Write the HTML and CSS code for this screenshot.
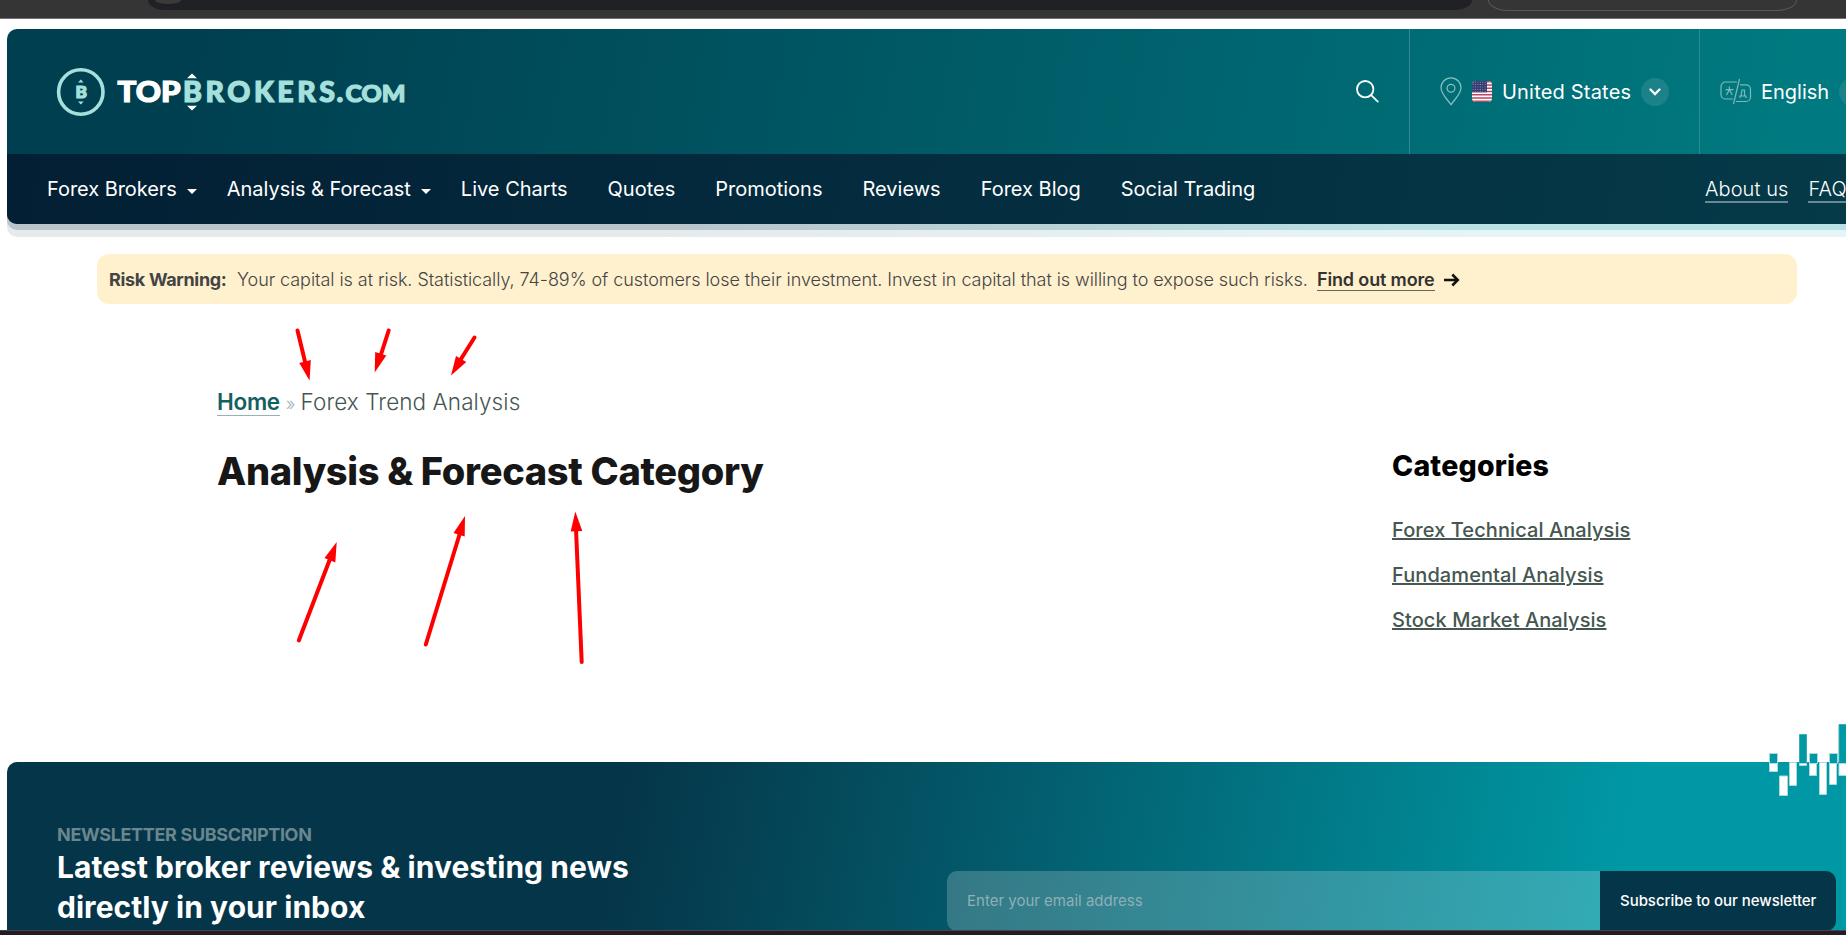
FILE: index.html
```html
<!DOCTYPE html>
<html lang="en">
<head>
<meta charset="utf-8">
<title>Analysis &amp; Forecast Category</title>
<link rel="stylesheet" href="styles.css">
</head>
<body>
<div class="chrome">
  <div class="address"><span class="site-info"></span></div>
  <div class="pill"></div>
</div>
<main class="page">
  <header class="header">
    <div class="top">
      <a class="logo">
        <svg width="360" height="60" viewBox="50 61.5 360 60">
          <circle cx="80.8" cy="91.5" r="22.2" fill="none" stroke="#a6e0dc" stroke-width="3.6"/>
          <text class="logo-text mint" x="75.500" y="97.500" font-size="17.500" textLength="11.5" lengthAdjust="spacingAndGlyphs">B</text>
          <path d="M78 82l2.8-3 2.8 3zM78 101l2.8 3 2.8-3z" fill="#a6e0dc"/>
          <text class="logo-text white" x="117.500" y="101.700" font-size="28.500" textLength="63" lengthAdjust="spacingAndGlyphs">TOP</text>
          <text class="logo-text mint" x="183" y="101.700" font-size="28.500" textLength="152" lengthAdjust="spacing">BROKERS</text>
          <text class="logo-text mint" x="336.5" y="101.700" font-size="28.500">.</text>
          <text class="logo-text mint" x="345.500" y="101.700" font-size="23" textLength="60" lengthAdjust="spacingAndGlyphs">COM</text>
          <path d="M187 77.8l5-4.8 5 4.8zM187 105.3l5 4.8 5-4.8z" fill="#fff"/>
        </svg>
      </a>
      <div class="search">
        <svg width="24" height="24" viewBox="0.6 0.6 24 24" fill="none" stroke="#fff" stroke-width="1.8" stroke-linecap="round"><circle cx="9.8" cy="9.8" r="8.2"/><path d="M16 16l6.4 6.2"/></svg>
      </div>
      <div class="region">
        <svg class="pin" width="22" height="29" viewBox="0 0 22 29" fill="none" stroke="#8bc0c3" stroke-width="1.2"><path d="M11 27.7C7.5 22.5 1 17 1 10.8a10 10 0 0 1 20 0C21 17 14.500 22.500 11 27.700z"/><circle cx="11" cy="11.300" r="3.900"/></svg>
        <svg class="flag" width="20" height="21" viewBox="0 0 20 21"><defs><clipPath id="flagclip"><rect width="20" height="21" rx="4"/></clipPath><pattern id="stars" width="2.400" height="2.400" patternUnits="userSpaceOnUse"><circle cx="1" cy="1" r=".5" fill="#b9bfe0"/></pattern></defs><g clip-path="url(#flagclip)"><rect width="20" height="21" fill="#fff"/><path d="M0 .8h20M0 4h20M0 7.250h20M0 10.500h20M0 13.700h20M0 16.950h20M0 20.200h20" stroke="#b9475f" stroke-width="1.620"/><rect width="15" height="11.300" fill="#34396f"/><rect width="15" height="11.300" fill="url(#stars)"/></g></svg>
        <span class="label">United States</span>
        <span class="round"><svg width="12" height="8" viewBox="0 0 12 8" fill="none" stroke="#fff" stroke-width="2.300" stroke-linecap="round"><path d="M1.500 1.500L6 6l4.500-4.500"/></svg></span>
      </div>
      <div class="language">
        <svg width="32" height="27" viewBox="0 0 32 27" fill="none" stroke="#7fb9bd" stroke-width="1.200"><path d="M17 4H5.500A4.500 4.500 0 0 0 1 8.500v8A4.500 4.500 0 0 0 5.500 21H13M19.500 1L13.500 26M20 6.800h6a4.500 4.500 0 0 1 4.500 4.500V19a4.500 4.500 0 0 1-4.500 4.500H16M9.300 8.500v3.300M5.500 11.700h8M6.500 17l2.800-5.200 3 5.200"/><path d="M20 20v-2h6v2M21 18l1-6h2.500v6"/></svg>
        <span class="label">English</span>
        <span class="round"></span>
      </div>
    </div>
    <nav class="nav">
      <a class="drop">Forex Brokers</a><a class="drop">Analysis &amp; Forecast</a><a>Live Charts</a><a>Quotes</a><a>Promotions</a><a>Reviews</a><a>Forex Blog</a><a>Social Trading</a>
      <div class="aside"><a>About us</a><a>FAQ</a></div>
    </nav>
  </header>

  <div class="risk">
    <b>Risk Warning:</b>
    <span class="risk-text">Your capital is at risk. Statistically, 74-89% of customers lose their investment. Invest in capital that is willing to expose such risks.</span>
    <a>Find out more</a>
    <svg width="16" height="14" viewBox="0 0 16 14" fill="none" stroke="#111" stroke-width="2.500"><path d="M0 7h13.500M8.300 1.500L13.800 7l-5.500 5.500"/></svg>
  </div>

  <div class="content">
    <section class="main">
      <div class="crumbs"><a>Home</a><span class="sep">»</span><span class="current">Forex Trend Analysis</span></div>
      <h1>Analysis &amp; Forecast Category</h1>
    </section>
    <aside class="categories">
      <h2>Categories</h2>
      <a>Forex Technical Analysis</a>
      <a>Fundamental Analysis</a>
      <a>Stock Market Analysis</a>
    </aside>
  </div>

  <section class="newsletter">
    <div class="pitch">
      <p class="kicker">NEWSLETTER SUBSCRIPTION</p>
      <p class="headline">Latest broker reviews &amp; investing news<br>directly in your inbox</p>
    </div>
    <form class="form"><div class="field">Enter your email address</div><div class="submit">Subscribe to our newsletter</div></form>
    <svg class="candles" width="78" height="76" viewBox="1768 723 78 76">
      <g stroke="#a9dadd" stroke-width="1">
        <g fill="#0098a4"><path d="M1769.500 753.500h8v10h-8zM1809.500 753.500h8v10h-8zM1829.500 753.500h8v10h-8z"/><path stroke="#39adb6" d="M1799.500 734.500h7v29h-7zM1839 724.500h9v39h-9z"/></g>
        <g fill="#fff"><path d="M1769.500 763.500h8v8h-8zM1779.500 776h8v19.500h-8zM1789.500 762.500h7v23h-7zM1799.500 763.500h7v2h-7zM1809.500 763.500h7v12h-7zM1819.500 762.500h7v32h-7zM1829.500 763.500h7v21h-7zM1839 763.500h9v12h-9z"/></g>
      </g>
    </svg>
  </section>
</main>
<div class="taskbar"></div>
<svg class="annotations" width="1846" height="935" viewBox="0 0 1846 935">
  <g stroke="#f00" stroke-width="4" stroke-linecap="round" fill="none">
    <path d="M297.500 330.500L305.600 364"/><path d="M388.700 330.500L380.500 356"/><path d="M474.500 337.500L461 359"/>
    <path d="M298.800 640.500L330 559"/><path d="M425.800 644.500L460 533"/><path d="M581.700 662L576 529"/>
  </g>
  <g stroke="none" fill="#f00">
    <path d="M309.500 380.500L299.300 363L310.800 360z"/><path d="M374.700 372.500L375.200 352L386.300 355.500z"/><path d="M451 375.500L456 356L466.300 362z"/>
    <path d="M336.700 542L324.500 558L335.300 562.500z"/><path d="M465 516L453.500 533L464.700 536.500z"/><path d="M575.300 511.500L570.700 531.500L582.300 531z"/>
  </g>
</svg>
</body>
</html>
```

FILE: styles.css
```css
* { box-sizing: border-box; }
body { margin: 0; width: 1846px; height: 935px; overflow: hidden; background: #fff; font-family: Inter, "Liberation Sans", sans-serif; display: flex; flex-direction: column; }
p, h1, h2 { margin: 0; }

.chrome { height: 19px; flex: none; background: #353535; border-bottom: 1px solid #707070; padding-left: 148px; display: flex; align-items: flex-start; gap: 16px; overflow: hidden; }
.address { width: 1324px; height: 10px; background: #202125; border-radius: 0 0 20px 20px / 0 0 12px 12px; padding-left: 7px; }
.site-info { display: block; width: 26px; height: 4px; background: #3a3a3a; border-radius: 0 0 13px 13px / 0 0 4px 4px; }
.pill { width: 309px; height: 11px; border: 1px solid #575757; border-top: 0; border-radius: 0 0 20px 20px / 0 0 11px 11px; }

.page { height: 911px; flex: none; padding: 10px 0 0 7px; overflow: hidden; }
.header { height: 195px; border-radius: 10px 0 0 10px; background: linear-gradient(100deg, #003f50 10%, #007a80 97%); position: relative; }
.header::before, .header::after { content: ""; position: absolute; z-index: -1; left: 0; right: 0; bottom: -6px; height: 40px; border-radius: 0 0 0 10px; background: linear-gradient(90deg, #b8c5cb 35%, #b8e2e5 80%); }
.header::after { z-index: -2; bottom: -13px; background: linear-gradient(90deg, #e6eaec 35%, #e5f4f5 80%); }
.top { height: 125px; display: flex; align-items: center; padding-left: 43px; overflow: hidden; }
.logo { display: flex; flex: none; }
.logo-text { font-family: Lato, sans-serif; font-weight: 900; stroke-width: 1.2px; }
.mint { fill: #a6e0dc; stroke: #a6e0dc; }
.white { fill: #fff; stroke: #fff; }
.search { flex: none; margin-left: 946px; width: 53px; display: flex; }
.region { flex: none; width: 290px; height: 125px; border-left: 1px solid #31898f; display: flex; align-items: center; padding-left: 30px; }
.pin { margin-right: 10px; }
.flag { margin-right: 10px; }
.label { flex: none; font-size: 20px; letter-spacing: .2px; color: #fff; white-space: nowrap; }
.region .label { width: 139px; }
.round { width: 28px; height: 28px; flex: none; border-radius: 50%; background: #1c828a; display: flex; align-items: center; justify-content: center; }
.language { flex: none; width: 180px; height: 125px; border-left: 1px solid #31898f; display: flex; align-items: center; padding-left: 20px; }
.language .label { margin-left: 9px; width: 78px; letter-spacing: 0; }
.nav { height: 70px; padding-left: 40px; border-radius: 0 0 0 10px; background: linear-gradient(100deg, #031f34, #053a49); display: flex; align-items: center; gap: 40px; font-size: 20px; letter-spacing: 0; color: #fff; white-space: nowrap; }
.drop { display: flex; align-items: center; margin-right: -10px; letter-spacing: -.05px; }
.drop::after { content: ""; margin: 5px 0 0 10px; border: 5px solid transparent; border-top-color: #fff; border-bottom: 0; }
.aside { margin-left: auto; width: 141px; flex: none; display: flex; gap: 20px; font-weight: 300; letter-spacing: .08px; }
.aside a { border-bottom: 2px solid #6a8793; height: 27px; line-height: 26px; }

.risk { margin: 30px 0 0 90px; width: 1700px; height: 50px; border-radius: 12px; background: #fff0ce; padding: 2px 12px 0; display: flex; align-items: center; font-size: 18px; line-height: 24px; color: #444; white-space: nowrap; letter-spacing: -.06px; }
.risk b { width: 128px; font-weight: 700; letter-spacing: -.32px; }
.risk-text { width: 1080px; font-weight: 300; }
.risk a { color: #333; font-weight: 600; letter-spacing: -.15px; border-bottom: 1px solid #666; margin-right: 9px; line-height: 20px; }

.content { height: 458px; display: flex; padding-left: 210px; }
.main { width: 1175px; padding-top: 84px; }
.crumbs { display: flex; align-items: baseline; height: 28px; line-height: 27px; font-size: 22.5px; font-weight: 300; letter-spacing: .08px; color: #465650; white-space: nowrap; }
.crumbs a { color: #14605f; font-weight: 600; letter-spacing: -.3px; border-bottom: 1px solid #93b3ba; }
.sep { font-size: 18px; color: #9db3b8; margin: 0 5px 0 6px; }
h1 { margin-top: 30px; font-size: 38px; line-height: 50px; font-weight: 800; letter-spacing: -.32px; color: #171717; white-space: nowrap; }
.categories { padding-top: 144px; display: flex; flex-direction: column; align-items: flex-start; }
h2 { font-size: 28.5px; line-height: 36px; font-weight: 800; letter-spacing: .2px; color: #000; margin-bottom: 24px; }
.categories a { font-size: 20px; font-weight: 500; line-height: 45px; color: #465650; text-decoration: underline; white-space: nowrap; letter-spacing: .08px; }

.newsletter { position: relative; height: 220px; border-radius: 10px 0 0 0; background: linear-gradient(100deg, #053548 33%, #0098a4 87%); padding: 62px 10px 0 50px; display: flex; justify-content: space-between; }
.kicker { font-size: 18px; line-height: 22px; font-weight: 700; color: #6a868f; letter-spacing: -.34px; }
.headline { padding-top: 1px; font-size: 30px; line-height: 40px; font-weight: 700; letter-spacing: .04px; color: #fff; white-space: nowrap; }
.form { width: 889px; height: 60px; margin-top: 47px; border-radius: 10px; overflow: hidden; display: flex; font-size: 15px; line-height: 60px; }
.field { width: 653px; padding-left: 20px; background: rgba(255,255,255,.2); color: #8eb0b6; }
.submit { width: 236px; padding-left: 20px; background: #053548; color: #fff; font-weight: 500; white-space: nowrap; letter-spacing: -.04px; }
.candles { position: absolute; right: 0; top: -39px; }
.taskbar { height: 5px; flex: none; background: #241c24; border-top: 1px solid #4a4448; }
.annotations { position: absolute; left: 0; top: 0; pointer-events: none; }
```
